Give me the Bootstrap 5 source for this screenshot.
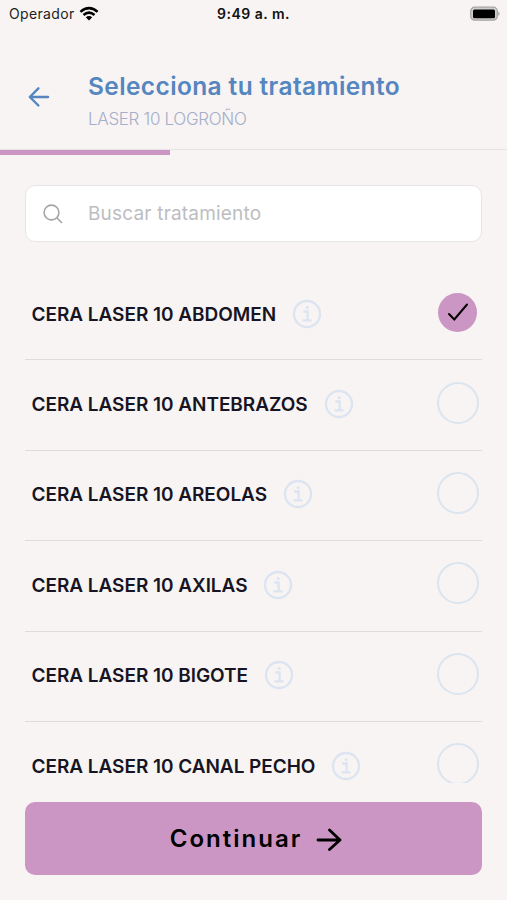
<!DOCTYPE html>
<html lang="es">
<head>
<meta charset="utf-8">
<meta name="viewport" content="width=device-width, initial-scale=1">
<title>Selecciona tu tratamiento</title>
<link href="https://cdn.jsdelivr.net/npm/bootstrap@5.3.0/dist/css/bootstrap.min.css" rel="stylesheet">
<style>
body{background:#f7f4f3;font-family:Inter,"Liberation Sans",sans-serif;height:900px;overflow:hidden}
svg{display:block;flex:none}
.statusbar{height:28px;padding:0 7px 0 9px;font-size:14px;line-height:28px;color:#222}
.clock{font-weight:600;letter-spacing:.5px;color:#111;white-space:nowrap}
.carrier{letter-spacing:.35px}
.screen-head{height:121px;padding:43px 25px 0 28px;column-gap:38px}
.back-btn{margin-top:15px}
.head-title{font-size:24.5px;font-weight:600;line-height:30px;color:#5586bf;letter-spacing:.38px}
.head-sub{font-size:17px;font-weight:300;line-height:22px;color:#a5aecb;margin-top:7px;letter-spacing:-.32px}
.step-track{height:6px;border-radius:0;background:transparent;border-top:1.5px solid #e6e3e2;overflow:visible}
.step-track .progress-bar{width:170px;height:5px;background:#cb96c3}
.page-col{width:457px}
.search-box{margin-top:30px;height:57px;border:1.5px solid #e8e6e4;border-radius:10px;background:#fff;padding-left:17px;column-gap:25px}
.search-box .form-control{font-size:19px;line-height:24px;height:54px;letter-spacing:.19px;padding:0 0 1px;box-shadow:none;background:transparent}
.search-box .form-control::placeholder{color:#bdbdc1;opacity:1}
.treatments{height:513px;margin-top:28px;overflow:hidden}
.treatment{height:90.4px;border-bottom:1.5px solid #dedbdb;padding:0 3px 0 6.5px}
.treatment-name{font-size:19px;font-weight:600;line-height:24px;color:#171523;letter-spacing:-.04px}
.info-icon{margin-bottom:2px}
.pick{width:42px;height:42px;border:2.4px solid #dbe4ef;border-radius:50%;margin-top:-5px}
.pick.picked{width:39px;height:39px;border:0;background:#cb96c3;margin-right:2px}
.continue-btn{margin-top:19px;height:73px;border:0;border-radius:10px;background:#cb96c3!important;color:#000!important;font-size:24px;font-weight:600;letter-spacing:2px;column-gap:14px;padding-left:17px}
</style>
</head>
<body>
<svg class="d-none">
<symbol id="info" viewBox="0 0 30 30"><g fill="none" stroke="#dbe4f0" stroke-width="2.3"><circle cx="15" cy="15" r="13"/><path d="M11.3 12.5H15.6V21M10.5 21.3H19.5"/></g><circle cx="15.2" cy="8.4" r="1.5" fill="#dbe4f0"/></symbol>
</svg>
<div class="statusbar d-flex justify-content-between position-relative">
<div class="d-flex align-items-center gap-1"><span class="carrier">Operador</span>
<svg width="20" height="16" viewBox="0 0 20 16"><g fill="none" stroke="#000" stroke-width="2.5"><path d="M1.4 5.9Q10-1.6 18.6 5.9M4.5 9Q10 4.2 15.5 9"/></g><path d="M6.8 11.3Q10 8.8 13.2 11.3L10 14.6Z"/></svg></div>
<span class="clock position-absolute start-50 translate-middle-x">9:49 a. m.</span>
<svg class="align-self-center" width="30" height="16" viewBox="0 0 30 16"><rect x=".7" y="1.2" width="26.6" height="13" rx="4" fill="#d0cecd" stroke="#a6a4a3" stroke-width="1.2"/><rect x="3" y="3.4" width="22" height="8.8" rx="1.5"/><path d="M28.3 5.4Q31 7.6 28.3 10Z" fill="#a6a4a3"/></svg>
</div>
<header class="screen-head d-flex">
<a href="#" class="back-btn align-self-start" aria-label="Volver"><svg width="22" height="22" viewBox="0 0 22 22" fill="none" stroke="#5586bf" stroke-width="2.4" stroke-linecap="round" stroke-linejoin="round"><path d="M20 11H2M10.4 2.3L1.8 11L10.4 19.5"/></svg></a>
<div><h1 class="head-title mb-0">Selecciona tu tratamiento</h1><div class="head-sub">LASER 10 LOGROÑO</div></div>
</header>
<div class="progress step-track"><div class="progress-bar"></div></div>
<main class="page-col d-flex flex-column mx-auto">
<div class="search-box d-flex align-items-center"><svg width="20" height="20" viewBox="0 0 20 20" fill="none" stroke="#a4a4a4" stroke-width="1.6"><circle cx="8.5" cy="8.5" r="7.4"/><path d="M13.8 13.8L19 19"/></svg><input class="form-control border-0" placeholder="Buscar tratamiento"></div>
<div class="treatments">
<div class="treatment d-flex align-items-center justify-content-between"><div class="d-flex align-items-center"><span class="treatment-name">CERA LASER 10 ABDOMEN</span><svg class="info-icon ms-3" width="30" height="30"><use href="#info"/></svg></div><span class="pick picked d-flex align-items-center justify-content-center"><svg width="22" height="20" viewBox="0 0 22 20" fill="none" stroke="#000" stroke-width="2" stroke-linecap="round"><path d="M2 12L7.3 17.5L20 2.5"/></svg></span></div>
<div class="treatment d-flex align-items-center justify-content-between"><div class="d-flex align-items-center"><span class="treatment-name">CERA LASER 10 ANTEBRAZOS</span><svg class="info-icon ms-3" width="30" height="30"><use href="#info"/></svg></div><span class="pick"></span></div>
<div class="treatment d-flex align-items-center justify-content-between"><div class="d-flex align-items-center"><span class="treatment-name">CERA LASER 10 AREOLAS</span><svg class="info-icon ms-3" width="30" height="30"><use href="#info"/></svg></div><span class="pick"></span></div>
<div class="treatment d-flex align-items-center justify-content-between"><div class="d-flex align-items-center"><span class="treatment-name">CERA LASER 10 AXILAS</span><svg class="info-icon ms-3" width="30" height="30"><use href="#info"/></svg></div><span class="pick"></span></div>
<div class="treatment d-flex align-items-center justify-content-between"><div class="d-flex align-items-center"><span class="treatment-name">CERA LASER 10 BIGOTE</span><svg class="info-icon ms-3" width="30" height="30"><use href="#info"/></svg></div><span class="pick"></span></div>
<div class="treatment d-flex align-items-center justify-content-between"><div class="d-flex align-items-center"><span class="treatment-name">CERA LASER 10 CANAL PECHO</span><svg class="info-icon ms-3" width="30" height="30"><use href="#info"/></svg></div><span class="pick"></span></div>
</div>
<button class="btn continue-btn d-flex align-items-center justify-content-center"><span>Continuar</span><svg width="26" height="24" viewBox="0 0 26 24" fill="none" stroke="#000" stroke-width="2.8" stroke-linecap="round" stroke-linejoin="round"><path d="M2 13H24M13.5 3L24 13L13.5 22.5"/></svg></button>
</main>
<script src="https://cdn.jsdelivr.net/npm/bootstrap@5.3.0/dist/js/bootstrap.bundle.min.js"></script>
</body>
</html>
